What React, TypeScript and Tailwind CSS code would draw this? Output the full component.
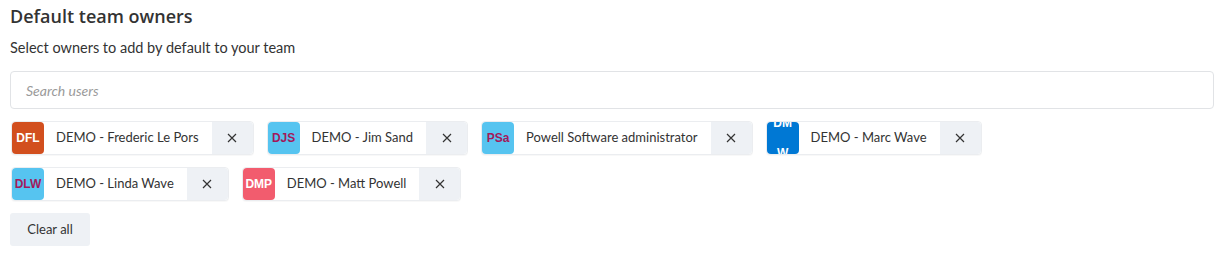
import React from "react";

type Owner = { initials: string; name: string; bg: string; fg: string; wrap?: boolean };

const owners: Owner[] = [
  { initials: "DFL", name: "DEMO - Frederic Le Pors", bg: "bg-[#d24f1e]", fg: "text-white" },
  { initials: "DJS", name: "DEMO - Jim Sand", bg: "bg-[#56c4f0]", fg: "text-[#a3195b]" },
  { initials: "PSa", name: "Powell Software administrator", bg: "bg-[#56c4f0]", fg: "text-[#a3195b]" },
  { initials: "DMW", name: "DEMO - Marc Wave", bg: "bg-[#0078d4]", fg: "text-white", wrap: true },
  { initials: "DLW", name: "DEMO - Linda Wave", bg: "bg-[#56c4f0]", fg: "text-[#a3195b]" },
  { initials: "DMP", name: "DEMO - Matt Powell", bg: "bg-[#f25c6e]", fg: "text-white" },
];

function Chip({ o }: { o: Owner }) {
  return (
    <div className="flex h-[34px] items-stretch rounded-[4px] border border-[#ebedf0] bg-white shadow-[0_1px_1px_rgba(0,0,0,0.03)]">
      <div
        className={`flex w-[32px] items-center justify-center overflow-hidden rounded-[4px] ${o.bg} ${o.fg} text-[12px] font-bold ${o.wrap ? "leading-[30px] text-center" : "leading-none"}`}
        style={{ fontFamily: "'Liberation Sans', Arial, sans-serif" }}
      >
        {o.wrap ? <span className="block w-[24px] break-all text-center">{o.initials}</span> : o.initials}
      </div>
      <div className="flex items-center pl-3 pr-[13px] text-[13px] text-[#333]">{o.name}</div>
      <div className="flex w-[41px] items-center justify-center rounded-r-[4px] bg-[#eef1f5] text-[#333]">
        <svg width="10" height="10" viewBox="0 0 10 10" stroke="#333" strokeWidth="1.2" fill="none">
          <path d="M1 1 L9 9 M9 1 L1 9" />
        </svg>
      </div>
    </div>
  );
}

export default function App() {
  return (
    <div className="w-[1224px] h-[263px] bg-white px-[10px] pt-[4px]" style={{ fontFamily: "Lato, 'Noto Sans', sans-serif" }}>
      <h2
        className="text-[18px] font-semibold leading-[24px] text-[#333]"
        style={{ fontFamily: "'Open Sans', Lato, sans-serif" }}
      >
        Default team owners
      </h2>
      <p className="mt-[11px] text-[14.5px] leading-[18px] text-[#333]">Select owners to add by default to your team</p>
      <div className="mt-[14px] flex h-[38px] items-center rounded-[4px] border border-[#e1e3e6] px-[15px]">
        <span className="text-[14px] italic text-[#9a9a9a]">Search users</span>
      </div>
      <div className="mt-[12px] flex max-w-[1180px] flex-wrap gap-x-[13px] gap-y-[12px] pl-px">
        {owners.map((o) => (
          <Chip key={o.initials} o={o} />
        ))}
      </div>
      <button className="mt-[12px] h-[33px] w-[80px] rounded-[3px] bg-[#eef1f5] text-[13px] text-[#333]">Clear all</button>
    </div>
  );
}
